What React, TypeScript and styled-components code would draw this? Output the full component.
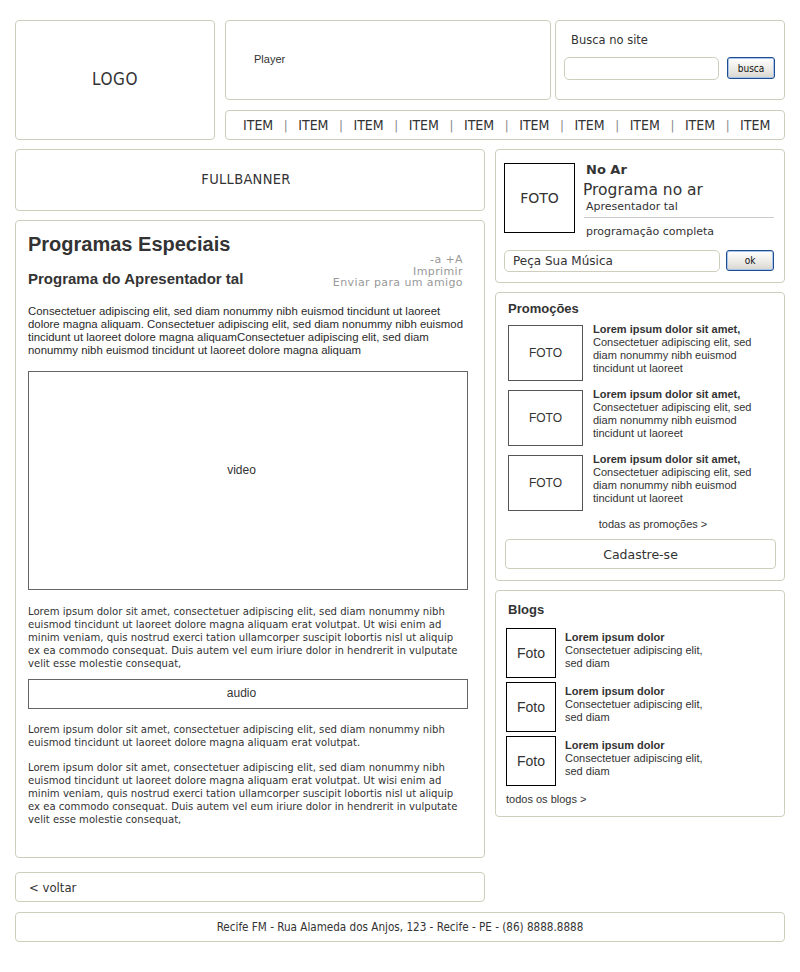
import React from "react";
import styled, { createGlobalStyle } from "styled-components";

const Global = createGlobalStyle`
  html, body { margin: 0; padding: 0; background: #fff; }
  body { font-family: "Liberation Sans", Arial, sans-serif; color: #333; }
  * { box-sizing: border-box; }
`;

const BORDER = "#cfcebd";
const VERDANA = `"DejaVu Sans", Verdana, sans-serif`;
const TAHOMA = `"DejaVu Sans Condensed", "DejaVu Sans", Tahoma, sans-serif`;
const ARIAL = `"Liberation Sans", Arial, sans-serif`;

const Page = styled.div`
  width: 800px;
  padding: 20px 15px 0 15px;
`;

const Header = styled.div`
  display: flex;
  gap: 10px;
`;

const HeaderRight = styled.div`
  width: 560px;
  display: grid;
  grid-template-columns: 326px 230px;
  grid-template-rows: 80px 30px;
  column-gap: 4px;
  row-gap: 10px;
`;

const Panel = styled.div<{ $h?: number }>`
  border: 1px solid ${BORDER};
  border-radius: 4px;
  background: #fff;
  ${(p) => (p.$h ? `height: ${p.$h}px;` : "")}
`;

const LogoBox = styled(Panel)`
  width: 200px;
  display: flex;
  align-items: center;
  justify-content: center;
  font-family: ${TAHOMA};
  font-size: 17px;
  letter-spacing: 0.5px;
  color: #333;
  padding-bottom: 2px;
`;

const PlayerBox = styled(Panel)`
  padding: 32px 0 0 28px;
  font-family: ${ARIAL};
  font-size: 11px;
`;

const SearchBox = styled(Panel)`
  padding: 11px 9px 0 8px;
`;

const SearchLabel = styled.div`
  font-family: ${VERDANA};
  font-size: 11.5px;
  padding-left: 7px;
  height: 16px;
  line-height: 16px;
`;

const SearchRow = styled.div`
  display: flex;
  align-items: flex-start;
  justify-content: space-between;
  margin-top: 9px;
`;

const TextField = styled.div<{ $w: number; $h: number }>`
  width: ${(p) => p.$w}px;
  height: ${(p) => p.$h}px;
  border: 1px solid ${BORDER};
  border-radius: 5px;
  background: #fff;
  font-family: ${VERDANA};
  font-size: 12px;
  line-height: ${(p) => p.$h - 2}px;
  padding-left: 8px;
  color: #333;
`;

const PushButton = styled.div<{ $w: number; $h: number }>`
  width: ${(p) => p.$w}px;
  height: ${(p) => p.$h}px;
  border: 1px solid #1d4f8f;
  border-radius: 3px;
  background: linear-gradient(#ffffff, #ebe9e4 60%, #d8d6cf);
  box-shadow: inset 0 0 0 1px #a9c4e8;
  display: flex;
  align-items: center;
  justify-content: center;
  font-family: ${TAHOMA};
  font-size: 10px;
  color: #111;
`;

const MenuBox = styled(Panel)`
  grid-column: 1 / span 2;
  display: flex;
  align-items: center;
  padding-left: 17px;
  font-family: ${TAHOMA};
  font-size: 14px;
  color: #333;
`;

const MenuItem = styled.span`
  display: inline-block;
`;

const MenuSep = styled.span`
  color: #888;
  display: inline-block;
  width: 25px;
  text-align: center;
  font-size: 13px;
`;

const Body = styled.div`
  display: grid;
  grid-template-columns: 470px 290px;
  column-gap: 10px;
  margin-top: 9px;
  align-items: start;
`;

const Column = styled.div`
  display: flex;
  flex-direction: column;
  gap: 9px;
`;

const BannerBox = styled(Panel)`
  display: flex;
  align-items: center;
  justify-content: center;
  font-family: ${TAHOMA};
  font-size: 14.5px;
  letter-spacing: 0.3px;
  padding: 0 8px 3px 0;
`;

const MainBox = styled(Panel)`
  padding: 11px 16px 0 12px;
`;

const Title = styled.h1`
  margin: 0;
  font-family: ${ARIAL};
  font-size: 20px;
  font-weight: bold;
  color: #333;
  line-height: 24px;
`;

const SubRow = styled.div`
  display: flex;
  justify-content: space-between;
  align-items: flex-end;
  margin-top: -2px;
`;

const SubTitle = styled.h2`
  margin: 0;
  font-family: ${ARIAL};
  font-size: 15px;
  font-weight: bold;
  color: #333;
  line-height: 18px;
  padding-bottom: 2px;
`;

const Tools = styled.div`
  text-align: right;
  font-family: ${VERDANA};
  font-size: 11px;
  line-height: 11.5px;
  color: #999;
  letter-spacing: 0.4px;
  padding-right: 5px;
  margin-bottom: 1px;
`;

const LeadText = styled.p`
  margin: 15px 0 0 0;
  font-family: ${ARIAL};
  font-size: 11.4px;
  line-height: 13px;
  color: #2a2a2a;
`;

const MediaBox = styled.div<{ $h: number; $pt: number; $mt: number }>`
  width: 440px;
  height: ${(p) => p.$h}px;
  margin-top: ${(p) => p.$mt}px;
  border: 1px solid #666;
  text-align: center;
  padding-top: ${(p) => p.$pt}px;
  padding-right: 13px;
  font-family: ${ARIAL};
  font-size: 12px;
  color: #333;
`;

const BodyText = styled.p<{ $mt: number }>`
  margin: ${(p) => p.$mt}px 0 0 0;
  width: 440px;
  font-family: ${VERDANA};
  font-size: 10.1px;
  line-height: 13px;
  color: #333;
`;

const BackBox = styled(Panel)`
  margin-top: 5px;
  padding-left: 13px;
  display: flex;
  align-items: center;
  font-family: ${TAHOMA};
  font-size: 13px;
`;

const NoArBox = styled(Panel)`
  padding: 13px 10px 0 8px;
`;

const NoArTop = styled.div`
  display: flex;
  gap: 9px;
`;

const Photo = styled.div<{ $w: number; $h: number; $c?: string; $fs?: number; $font?: string }>`
  flex: none;
  width: ${(p) => p.$w}px;
  height: ${(p) => p.$h}px;
  border: 1px solid ${(p) => p.$c || "#000"};
  display: flex;
  align-items: center;
  justify-content: center;
  font-family: ${(p) => p.$font || ARIAL};
  font-size: ${(p) => p.$fs || 12}px;
  color: #333;
`;

const NoArInfo = styled.div`
  flex: 1;
  font-family: ${VERDANA};
  color: #333;
`;

const NoArLabel = styled.div`
  font-size: 13px;
  font-weight: bold;
  line-height: 15px;
  padding-left: 2px;
  margin-top: -1px;
`;

const NoArProgram = styled.div`
  font-size: 15.5px;
  line-height: 20px;
  margin-top: 3px;
  margin-left: -1px;
`;

const NoArSmall = styled.div<{ $line?: boolean }>`
  font-size: 11px;
  line-height: 14px;
  padding-left: 2px;
  ${(p) => (p.$line ? `border-bottom: 1px solid #ccc; padding-bottom: 3px; margin-bottom: 7px;` : "")}
`;

const RequestRow = styled.div`
  display: flex;
  justify-content: space-between;
  margin-top: 11px;
`;

const SideBox = styled(Panel)<{ $pt?: number }>`
  padding: ${(p) => p.$pt ?? 8}px 8px 0 12px;
`;

const SideTitle = styled.h3`
  margin: 0;
  font-family: ${ARIAL};
  font-size: 13px;
  font-weight: bold;
  color: #333;
  line-height: 16px;
`;

const PromoList = styled.div`
  display: flex;
  flex-direction: column;
  gap: 9px;
  margin-top: 8px;
`;

const PromoItem = styled.div`
  display: flex;
  gap: 10px;
`;

const ItemText = styled.div<{ $pt: number }>`
  font-family: ${ARIAL};
  font-size: 11px;
  line-height: 13px;
  color: #333;
  margin-top: ${(p) => p.$pt}px;
`;

const Strong = styled.div`
  font-weight: bold;
`;

const CenterLink = styled.div`
  text-align: center;
  font-family: ${ARIAL};
  font-size: 11px;
  margin-top: 7px;
  padding-left: 22px;
`;

const WideButton = styled.div`
  margin: 9px 0 0 -3px;
  width: 271px;
  height: 30px;
  border: 1px solid ${BORDER};
  border-radius: 4px;
  display: flex;
  align-items: center;
  justify-content: center;
  font-family: ${VERDANA};
  font-size: 12.5px;
  color: #333;
`;

const BlogList = styled.div`
  display: flex;
  flex-direction: column;
  gap: 4px;
  margin-top: 10px;
  margin-left: -2px;
`;

const BlogItem = styled.div`
  display: flex;
  gap: 9px;
`;

const BlogLink = styled.div`
  font-family: ${ARIAL};
  font-size: 11px;
  margin: 7px 0 0 -2px;
`;

const Footer = styled(Panel)`
  margin-top: 10px;
  display: flex;
  align-items: center;
  justify-content: center;
  font-family: ${TAHOMA};
  font-size: 11.6px;
  color: #333;
`;

const lorem1 =
  "Lorem ipsum dolor sit amet, consectetuer adipiscing elit, sed diam nonummy nibh euismod tincidunt ut laoreet dolore magna aliquam erat volutpat. Ut wisi enim ad minim veniam, quis nostrud exerci tation ullamcorper suscipit lobortis nisl ut aliquip ex ea commodo consequat. Duis autem vel eum iriure dolor in hendrerit in vulputate velit esse molestie consequat,";
const lorem2 =
  "Lorem ipsum dolor sit amet, consectetuer adipiscing elit, sed diam nonummy nibh euismod tincidunt ut laoreet dolore magna aliquam erat volutpat.";

export default function App() {
  const items = Array.from({ length: 10 });
  return (
    <Page>
      <Global />
      <Header>
        <LogoBox $h={120}>LOGO</LogoBox>
        <HeaderRight>
          <PlayerBox>Player</PlayerBox>
          <SearchBox>
            <SearchLabel>Busca no site</SearchLabel>
            <SearchRow>
              <TextField $w={155} $h={23} />
              <PushButton $w={48} $h={22}>busca</PushButton>
            </SearchRow>
          </SearchBox>
          <MenuBox>
            {items.map((_, i) => (
              <React.Fragment key={i}>
                {i > 0 && <MenuSep>|</MenuSep>}
                <MenuItem>ITEM</MenuItem>
              </React.Fragment>
            ))}
          </MenuBox>
        </HeaderRight>
      </Header>
      <Body>
        <Column>
          <BannerBox $h={62}>FULLBANNER</BannerBox>
          <MainBox $h={638}>
            <Title>Programas Especiais</Title>
            <SubRow>
              <SubTitle>Programa do Apresentador tal</SubTitle>
              <Tools>
                <div>-a +A</div>
                <div>Imprimir</div>
                <div>Enviar para um amigo</div>
              </Tools>
            </SubRow>
            <LeadText>
              Consectetuer adipiscing elit, sed diam nonummy nibh euismod tincidunt ut laoreet dolore magna aliquam.
              Consectetuer adipiscing elit, sed diam nonummy nibh euismod tincidunt ut laoreet dolore magna
              aliquamConsectetuer adipiscing elit, sed diam nonummy nibh euismod tincidunt ut laoreet dolore magna aliquam
            </LeadText>
            <MediaBox $h={219} $pt={91} $mt={14}>video</MediaBox>
            <BodyText $mt={15}>{lorem1}</BodyText>
            <MediaBox $h={30} $pt={6} $mt={9}>audio</MediaBox>
            <BodyText $mt={14}>{lorem2}</BodyText>
            <BodyText $mt={12}>{lorem1}</BodyText>
          </MainBox>
          <BackBox $h={30}>&lt; voltar</BackBox>
        </Column>
        <Column>
          <NoArBox $h={134}>
            <NoArTop>
              <Photo $w={71} $h={70} $fs={14} $font={VERDANA}>FOTO</Photo>
              <NoArInfo>
                <NoArLabel>No Ar</NoArLabel>
                <NoArProgram>Programa no ar</NoArProgram>
                <NoArSmall $line>Apresentador tal</NoArSmall>
                <NoArSmall>programação completa</NoArSmall>
              </NoArInfo>
            </NoArTop>
            <RequestRow>
              <TextField $w={216} $h={22}>Peça Sua Música</TextField>
              <PushButton $w={48} $h={21}>ok</PushButton>
            </RequestRow>
          </NoArBox>
          <SideBox $h={289}>
            <SideTitle>Promoções</SideTitle>
            <PromoList>
              {[0, 1, 2].map((i) => (
                <PromoItem key={i}>
                  <Photo $w={75} $h={56} $c="#555">FOTO</Photo>
                  <ItemText $pt={-2}>
                    <Strong>Lorem ipsum dolor sit amet,</Strong>
                    Consectetuer adipiscing elit, sed diam nonummy nibh euismod tincidunt ut laoreet
                  </ItemText>
                </PromoItem>
              ))}
            </PromoList>
            <CenterLink>todas as promoções &gt;</CenterLink>
            <WideButton>Cadastre-se</WideButton>
          </SideBox>
          <SideBox $h={227} $pt={11}>
            <SideTitle>Blogs</SideTitle>
            <BlogList>
              {[0, 1, 2].map((i) => (
                <BlogItem key={i}>
                  <Photo $w={50} $h={50} $fs={14}>Foto</Photo>
                  <ItemText $pt={3}>
                    <Strong>Lorem ipsum dolor</Strong>
                    Consectetuer adipiscing elit,
                    <br />
                    sed diam
                  </ItemText>
                </BlogItem>
              ))}
            </BlogList>
            <BlogLink>todos os blogs &gt;</BlogLink>
          </SideBox>
        </Column>
      </Body>
      <Footer $h={30}>Recife FM - Rua Alameda dos Anjos, 123 - Recife - PE - (86) 8888.8888</Footer>
    </Page>
  );
}
